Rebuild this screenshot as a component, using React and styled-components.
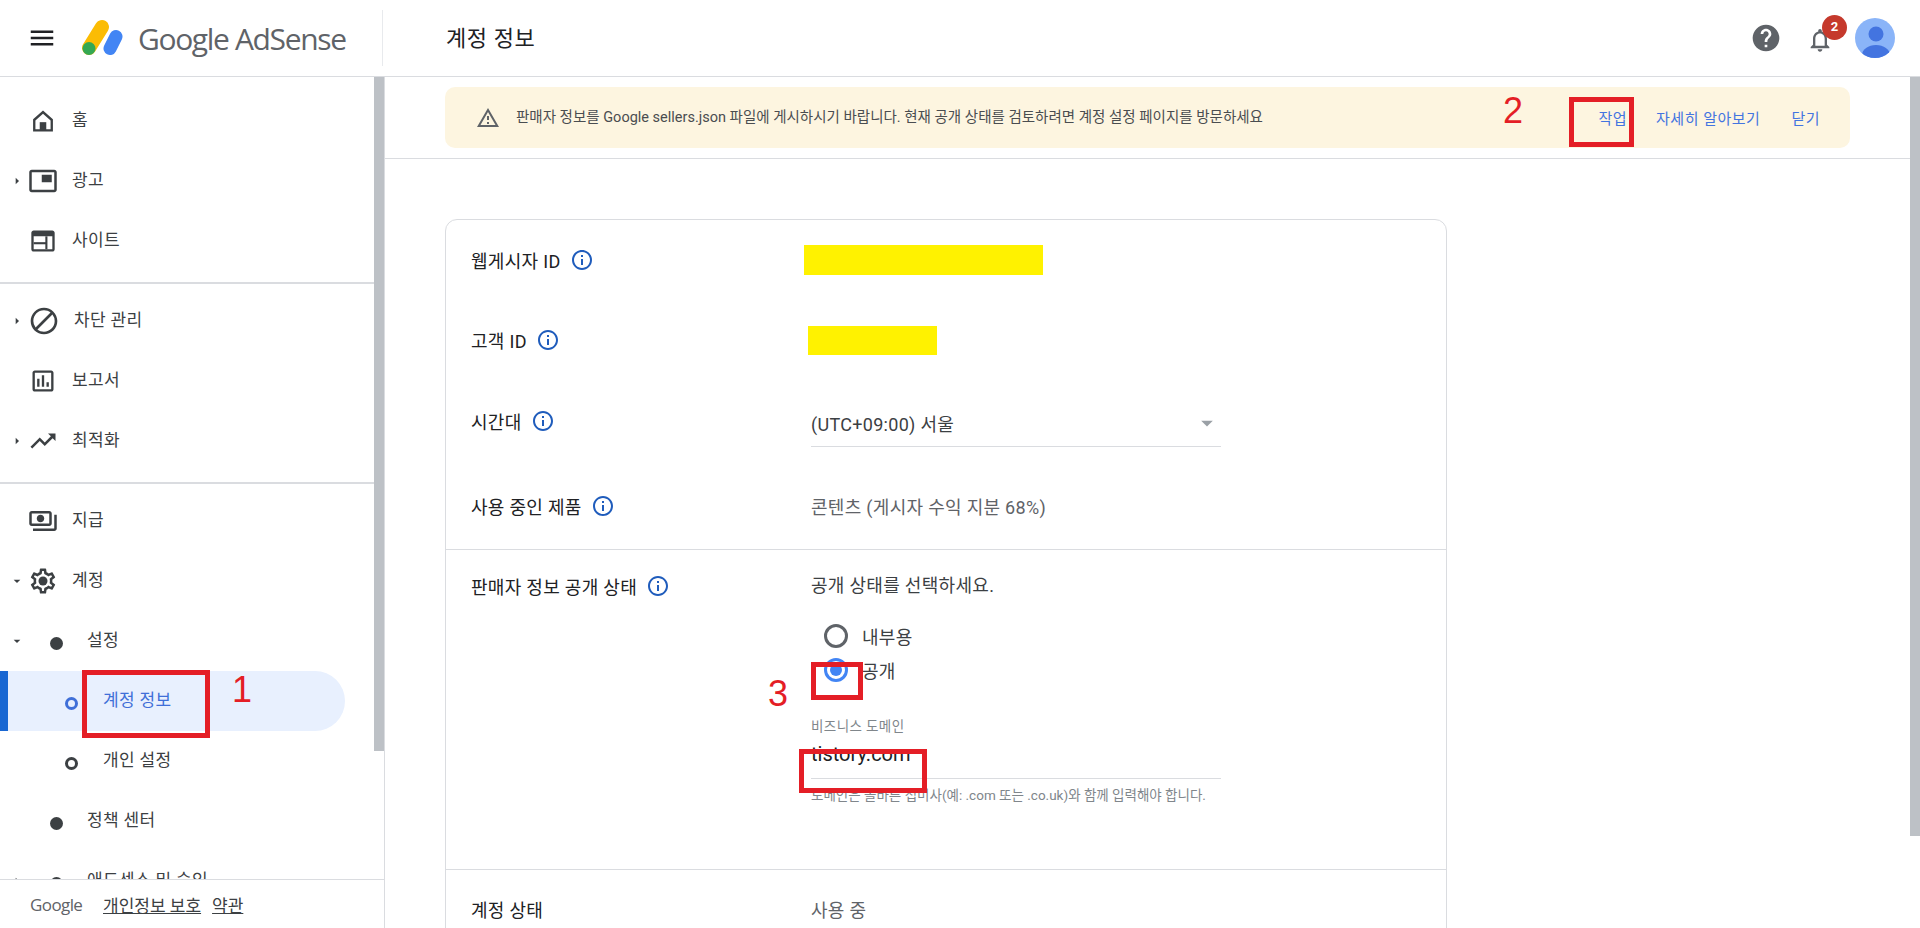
import React from "react";
import styled, { createGlobalStyle } from "styled-components";
import {
  MdMenu,
  MdHelp,
  MdOutlineNotifications,
  MdOutlineInfo,
  MdOutlineWarningAmber,
  MdBlock,
  MdTrendingUp,
  MdOutlineAssessment,
  MdOutlinePayments,
  MdPictureInPicture,
  MdArrowRight,
  MdArrowDropDown,
} from "react-icons/md";

const GlobalStyle = createGlobalStyle`
  html, body {
    margin: 0;
    height: 100%;
    overflow: hidden;
    background: #fff;
  }
  body {
    font-family: Roboto, "Noto Sans CJK KR", sans-serif;
    color: #3c4043;
  }
`;

const Page = styled.div`
  display: flex;
  flex-direction: column;
  height: 928px;
  overflow: hidden;
`;

const Header = styled.header`
  display: flex;
  align-items: center;
  flex: 0 0 76px;
  box-sizing: content-box;
  border-bottom: 1px solid #dadce0;
`;

const Brand = styled.div`
  display: flex;
  align-items: center;
  width: 383px;
  height: 56px;
  padding-left: 27px;
  box-sizing: border-box;
  border-right: 1px solid #e8eaed;
`;

const MenuButton = styled.span`
  display: flex;
  width: 30px;
  margin-right: 25px;
  color: #202124;
`;

const BrandName = styled.span`
  margin-left: 14px;
  font-family: "Open Sans", sans-serif;
  font-size: 30px;
  letter-spacing: -1.35px;
  color: #5f6368;
  white-space: nowrap;
`;

const PageTitle = styled.h1`
  flex: 1;
  margin: -4px 0 0 63px;
  font-size: 22px;
  font-weight: 400;
  letter-spacing: 0.6px;
  color: #202124;
`;

const HeaderTools = styled.div`
  display: flex;
  align-items: center;
  padding-right: 25px;
  color: #5f6368;
`;

const BellWrap = styled.span`
  position: relative;
  display: flex;
  margin: 3px 21px 0 24px;
`;

const Badge = styled.span`
  position: absolute;
  top: -11px;
  right: -13px;
  width: 25px;
  height: 25px;
  border-radius: 50%;
  background: #c5392c;
  color: #fff;
  font-size: 13px;
  font-weight: 700;
  line-height: 24px;
  text-align: center;
`;

const Body = styled.div`
  display: flex;
  flex: 1;
  min-height: 0;
`;

const Sidebar = styled.aside`
  display: flex;
  flex: 0 0 385px;
  box-sizing: border-box;
  border-right: 1px solid #dadce0;
`;

const SideColumn = styled.div`
  display: flex;
  flex-direction: column;
  flex: 1;
  min-width: 0;
`;

const Nav = styled.nav`
  flex: 1;
  min-height: 0;
  overflow: hidden;
  padding-top: 14px;
`;

const Thumb = styled.div`
  flex: 0 0 10px;
  height: ${(p) => p.$height}px;
  background: #bdc1c6;
`;

const NavRow = styled.div`
  display: flex;
  align-items: center;
  height: 60px;
  margin-right: 29px;
  padding-left: ${(p) => p.$indent || 0}px;
  position: relative;
  color: ${(p) => (p.$active ? "#3f6fd8" : "#3c4043")};
  background: ${(p) => (p.$active ? "#e8f0fe" : "transparent")};
  border-left: 8px solid ${(p) => (p.$active ? "#1967d2" : "transparent")};
  border-radius: ${(p) => (p.$active ? "0 30px 30px 0" : "0")};
  box-sizing: border-box;
`;

const Caret = styled.span`
  position: absolute;
  left: 1px;
  top: 50%;
  display: flex;
  margin-top: -8px;
  color: #3c4043;
`;

const NavIconBox = styled.span`
  display: flex;
  flex: 0 0 ${(p) => p.$width || 30}px;
  margin-left: 20px;
  justify-content: center;
  color: #3c4043;
`;

const NavLabel = styled.span`
  margin-left: 14px;
  margin-top: -6px;
  font-size: 17px;
  letter-spacing: 0.35px;
  white-space: nowrap;
`;

const Dot = styled.span`
  flex: 0 0 13px;
  height: 13px;
  margin-left: ${(p) => p.$left}px;
  margin-top: 4px;
  border-radius: 50%;
  box-sizing: border-box;
  ${(p) =>
    p.$ring
      ? `border: 3px solid ${p.$ring}; background: transparent;`
      : "background: #3c4043;"}
`;

const SubLabel = styled(NavLabel)`
  margin-left: ${(p) => p.$left}px;
`;

const SideRule = styled.div`
  height: 2px;
  margin: ${(p) => p.$top || 11}px 0 7px;
  background: #dadce0;
`;

const SideFooter = styled.div`
  display: flex;
  align-items: center;
  flex: 0 0 48px;
  padding: 0 0 0 30px;
  border-top: 1px solid #dadce0;
  margin-right: -10px;
  background: #fff;
  font-size: 17px;
  z-index: 1;
`;

const FooterBrand = styled.span`
  width: 73px;
  font-family: "Open Sans", sans-serif;
  font-size: 17px;
  letter-spacing: -0.6px;
  color: #5f6368;
`;

const FooterLink = styled.a`
  margin-right: 11px;
  color: #3c4043;
  text-decoration: underline;
  white-space: nowrap;
`;

const Main = styled.main`
  display: flex;
  flex: 1;
  min-width: 0;
`;

const Content = styled.div`
  flex: 1;
  min-width: 0;
  overflow: hidden;
  padding-top: 10px;
`;

const BannerArea = styled.div`
  padding: 0 60px 10px 60px;
  border-bottom: 1px solid #dadce0;
`;

const Banner = styled.div`
  position: relative;
  display: flex;
  align-items: center;
  height: 61px;
  padding-left: 31px;
  border-radius: 10px;
  background: #fdf5e0;
  font-size: 14.5px;
  color: #4a4d50;
`;

const BannerText = styled.span`
  flex: 1;
  margin-left: 16px;
  margin-top: -4px;
  white-space: nowrap;
`;

const BannerAction = styled.a`
  margin-right: ${(p) => p.$gap}px;
  color: #4374e0;
  font-size: 15px;
  letter-spacing: 0.5px;
  white-space: nowrap;
`;

const Card = styled.section`
  width: 1000px;
  margin: 60px 0 0 60px;
  border: 1px solid #dadce0;
  border-radius: 12px;
  font-size: 18px;
`;

const Row = styled.div`
  display: grid;
  grid-template-columns: 340px 410px;
  align-items: center;
  height: ${(p) => p.$height}px;
  padding-left: 25px;
`;

const Section = styled.div`
  position: relative;
  display: grid;
  grid-template-columns: 340px 410px;
  height: 321px;
  padding: 22px 0 0 25px;
  box-sizing: border-box;
  border-top: 1px solid #dadce0;
  border-bottom: 1px solid #dadce0;
`;

const Label = styled.div`
  display: flex;
  align-items: center;
  gap: 9px;
  color: #202124;
  letter-spacing: 0.3px;
  white-space: nowrap;
  height: 28px;
`;

const InfoIcon = styled(MdOutlineInfo)`
  color: #1f5cbc;
  flex: none;
`;

const Redaction = styled.div`
  width: ${(p) => p.$width}px;
  height: ${(p) => p.$height}px;
  margin-left: ${(p) => p.$left}px;
  background: #fff200;
`;

const SelectBox = styled.div`
  display: flex;
  align-items: center;
  justify-content: space-between;
  height: 46px;
  margin-top: 4px;
  border-bottom: 1px solid #dadce0;
  letter-spacing: 0.3px;
  color: #3c4043;
`;

const Value = styled.div`
  color: #5f6368;
  letter-spacing: 0.3px;
  white-space: nowrap;
`;

const Prompt = styled(Value)`
  height: 28px;
  line-height: 28px;
  color: #3c4043;
`;

const RadioRow = styled.label`
  display: flex;
  align-items: center;
  gap: 14px;
  height: 34px;
  margin-left: 13px;
  color: #3c4043;
  letter-spacing: 0.3px;
`;

const RadioMark = styled.span`
  display: flex;
  align-items: center;
  justify-content: center;
  width: 24px;
  height: 24px;
  box-sizing: border-box;
  border-radius: 50%;
  border: 3px solid ${(p) => (p.$on ? "#4285f4" : "#5f6368")};
  &::after {
    content: "";
    width: 12px;
    height: 12px;
    border-radius: 50%;
    background: ${(p) => (p.$on ? "#4285f4" : "transparent")};
  }
`;

const RadioGroup = styled.div`
  margin-top: 19px;
`;

const FieldCaption = styled.div`
  margin-top: 28px;
  font-size: 13.5px;
  letter-spacing: 0.4px;
  color: #80868b;
`;

const FieldInput = styled.div`
  height: 43px;
  line-height: 38px;
  border-bottom: 1px solid #dadce0;
  font-size: 20px;
  color: #202124;
`;

const HelpText = styled.div`
  margin-top: 6px;
  font-size: 13.5px;
  line-height: 20px;
  color: #80868b;
`;

const Callout = styled.div`
  position: absolute;
  left: ${(p) => p.$x}px;
  top: ${(p) => p.$y}px;
  width: ${(p) => p.$w}px;
  height: ${(p) => p.$h}px;
  box-sizing: border-box;
  border: 5px solid #e41e26;
  pointer-events: none;
`;

const CalloutNumber = styled.span`
  position: absolute;
  left: ${(p) => p.$x}px;
  top: ${(p) => p.$y}px;
  font-family: "Liberation Sans", sans-serif;
  font-size: 36px;
  line-height: 36px;
  color: #e41e26;
`;

const PageAnchor = styled.div`
  position: absolute;
  left: 0;
  top: 0;
`;

function Logo() {
  return (
    <svg width="42" height="38" viewBox="82 15 42 38">
      <line x1="89" y1="44" x2="102" y2="23" stroke="#fbbc04" strokeWidth="14" strokeLinecap="round" />
      <line x1="110" y1="44.5" x2="116" y2="32.5" stroke="#4285f4" strokeWidth="13" strokeLinecap="round" />
      <circle cx="89" cy="44.5" r="6.5" fill="#34a853" />
    </svg>
  );
}

function HomeIcon() {
  return (
    <svg width="28" height="28" viewBox="0 0 24 24" fill="currentColor">
      <path d="M12 3L3.5 10.6V21h17V10.6L12 3zm6.5 16h-13v-7.5L12 5.7l6.5 5.8V19z" />
      <rect x="9.2" y="13" width="5.6" height="7" />
    </svg>
  );
}

function SitesIcon() {
  return (
    <svg width="28" height="28" viewBox="0 0 24 24" fill="currentColor">
      <path d="M20 3H4c-1.1 0-2 .9-2 2v14c0 1.1.9 2 2 2h16c1.1 0 2-.9 2-2V5c0-1.1-.9-2-2-2zm0 16H4V8h16v11z" />
      <rect x="4" y="13" width="11" height="1.8" />
      <rect x="14" y="8" width="1.8" height="11" />
    </svg>
  );
}

function GearIcon() {
  return (
    <svg width="30" height="30" viewBox="0 0 24 24" fill="currentColor">
      <path d="M19.43 12.98c.04-.32.07-.64.07-.98 0-.34-.03-.66-.07-.98l2.11-1.65c.19-.15.24-.42.12-.64l-2-3.46c-.09-.16-.26-.25-.44-.25-.06 0-.12.01-.17.03l-2.49 1c-.52-.4-1.08-.73-1.69-.98l-.38-2.65C14.46 2.18 14.25 2 14 2h-4c-.25 0-.46.18-.49.42l-.38 2.65c-.61.25-1.17.59-1.69.98l-2.49-1c-.06-.02-.12-.03-.18-.03-.17 0-.34.09-.43.25l-2 3.46c-.13.22-.07.49.12.64l2.11 1.65c-.04.32-.07.65-.07.98 0 .33.03.66.07.98l-2.11 1.65c-.19.15-.24.42-.12.64l2 3.46c.09.16.26.25.44.25.06 0 .12-.01.17-.03l2.49-1c.52.4 1.08.73 1.69.98l.38 2.65c.03.24.24.42.49.42h4c.25 0 .46-.18.49-.42l.38-2.65c.61-.25 1.17-.59 1.69-.98l2.49 1c.06.02.12.03.18.03.17 0 .34-.09.43-.25l2-3.46c.12-.22.07-.49-.12-.64l-2.11-1.65zm-1.98-1.71c.04.31.05.52.05.73 0 .21-.02.43-.05.73l-.14 1.13.89.7 1.08.84-.7 1.21-1.27-.51-1.04-.42-.9.68c-.43.32-.84.56-1.25.73l-1.06.43-.16 1.13-.2 1.35h-1.4l-.19-1.35-.16-1.13-1.06-.43c-.43-.18-.83-.41-1.23-.71l-.91-.7-1.06.43-1.27.51-.7-1.21 1.08-.84.89-.7-.14-1.13c-.03-.31-.05-.54-.05-.74s.02-.43.05-.73l.14-1.13-.89-.7-1.08-.84.7-1.21 1.27.51 1.04.42.9-.68c.43-.32.84-.56 1.25-.73l1.06-.43.16-1.13.2-1.35h1.39l.19 1.35.16 1.13 1.06.43c.43.18.83.41 1.23.71l.91.7 1.06-.43 1.27-.51.7 1.21-1.07.85-.89.7.14 1.13z" />
      <circle cx="12" cy="12" r="3.6" />
    </svg>
  );
}

function Avatar() {
  return (
    <svg width="40" height="40" viewBox="0 0 40 40">
      <defs>
        <clipPath id="avatar-clip">
          <circle cx="20" cy="20" r="20" />
        </clipPath>
      </defs>
      <g clipPath="url(#avatar-clip)">
        <rect width="40" height="40" fill="#8ab4f8" />
        <circle cx="21" cy="16" r="7.5" fill="#4374e0" />
        <ellipse cx="21" cy="37" rx="14" ry="10" fill="#4374e0" />
      </g>
    </svg>
  );
}

function Item({ icon, label, caret, open }) {
  return (
    <NavRow>
      {caret && (
        <Caret>
          {open ? <MdArrowDropDown size={16} /> : <MdArrowRight size={16} />}
        </Caret>
      )}
      <NavIconBox>{icon}</NavIconBox>
      <NavLabel>{label}</NavLabel>
    </NavRow>
  );
}

export default function App() {
  return (
    <Page>
      <GlobalStyle />
      <Header>
        <Brand>
          <MenuButton>
            <MdMenu size={30} />
          </MenuButton>
          <Logo />
          <BrandName>Google AdSense</BrandName>
        </Brand>
        <PageTitle>계정 정보</PageTitle>
        <HeaderTools>
          <MdHelp size={32} />
          <BellWrap>
            <MdOutlineNotifications size={28} />
            <Badge>2</Badge>
          </BellWrap>
          <Avatar />
        </HeaderTools>
      </Header>

      <Body>
        <Sidebar>
          <SideColumn>
            <Nav>
              <Item icon={<HomeIcon />} label="홈" />
              <Item icon={<MdPictureInPicture size={30} />} label="광고" caret />
              <Item icon={<SitesIcon />} label="사이트" />
              <SideRule />
              <Item icon={<MdBlock size={32} />} label="차단 관리" caret />
              <Item icon={<MdOutlineAssessment size={28} />} label="보고서" />
              <Item icon={<MdTrendingUp size={30} />} label="최적화" caret />
              <SideRule />
              <Item icon={<MdOutlinePayments size={30} />} label="지급" />
              <Item icon={<GearIcon />} label="계정" caret open />
              <NavRow>
                <Caret>
                  <MdArrowDropDown size={16} />
                </Caret>
                <Dot $left={42} />
                <SubLabel $left={24}>설정</SubLabel>
              </NavRow>
              <NavRow $active>
                <Dot $left={57} $ring="#3f6fd8" />
                <SubLabel $left={25}>계정 정보</SubLabel>
              </NavRow>
              <NavRow>
                <Dot $left={57} $ring="#3c4043" />
                <SubLabel $left={25}>개인 설정</SubLabel>
              </NavRow>
              <NavRow>
                <Dot $left={42} />
                <SubLabel $left={24}>정책 센터</SubLabel>
              </NavRow>
              <NavRow>
                <Caret>
                  <MdArrowRight size={16} />
                </Caret>
                <Dot $left={42} />
                <SubLabel $left={24}>애드센스 및 승인</SubLabel>
              </NavRow>
            </Nav>
            <SideFooter>
              <FooterBrand>Google</FooterBrand>
              <FooterLink>개인정보 보호</FooterLink>
              <FooterLink>약관</FooterLink>
            </SideFooter>
          </SideColumn>
          <Thumb $height={674} />
        </Sidebar>

        <Main>
          <Content>
            <BannerArea>
              <Banner>
                <MdOutlineWarningAmber size={24} color="#5f6368" />
                <BannerText>
                  판매자 정보를 Google sellers.json 파일에 게시하시기 바랍니다. 현재 공개 상태를 검토하려면 계정 설정 페이지를 방문하세요
                </BannerText>
                <BannerAction $gap={29}>작업</BannerAction>
                <BannerAction $gap={31}>자세히 알아보기</BannerAction>
                <BannerAction $gap={30}>닫기</BannerAction>
              </Banner>
            </BannerArea>
            <Card>
              <Row $height={80}>
                <Label>
                  웹게시자 ID <InfoIcon size={24} />
                </Label>
                <Redaction $width={239} $height={30} $left={-7} />
              </Row>
              <Row $height={80}>
                <Label>
                  고객 ID <InfoIcon size={24} />
                </Label>
                <Redaction $width={129} $height={29} $left={-3} />
              </Row>
              <Row $height={82}>
                <Label>
                  시간대 <InfoIcon size={24} />
                </Label>
                <SelectBox>
                  (UTC+09:00) 서울
                  <MdArrowDropDown size={28} color="#9aa0a6" />
                </SelectBox>
              </Row>
              <Row $height={87}>
                <Label>
                  사용 중인 제품 <InfoIcon size={24} />
                </Label>
                <Value>콘텐츠 (게시자 수익 지분 68%)</Value>
              </Row>
              <Section>
                <Label>
                  판매자 정보 공개 상태 <InfoIcon size={24} />
                </Label>
                <div>
                  <Prompt>공개 상태를 선택하세요.</Prompt>
                  <RadioGroup>
                    <RadioRow>
                      <RadioMark />
                      내부용
                    </RadioRow>
                    <RadioRow>
                      <RadioMark $on />
                      공개
                    </RadioRow>
                  </RadioGroup>
                  <FieldCaption>비즈니스 도메인</FieldCaption>
                  <FieldInput>tistory.com</FieldInput>
                  <HelpText>
                    도메인은 올바른 접미사(예: .com 또는 .co.uk)와 함께 입력해야 합니다.
                  </HelpText>
                </div>
              </Section>
              <Row $height={78}>
                <Label>계정 상태</Label>
                <Value>사용 중</Value>
              </Row>
            </Card>
          </Content>
          <Thumb $height={759} />
        </Main>
      </Body>

      <PageAnchor>
        <Callout $x={82} $y={670} $w={128} $h={68} />
        <CalloutNumber $x={232} $y={672}>1</CalloutNumber>
        <Callout $x={1569} $y={97} $w={65} $h={50} />
        <CalloutNumber $x={1503} $y={93}>2</CalloutNumber>
        <Callout $x={811} $y={662} $w={52} $h={38} />
        <CalloutNumber $x={768} $y={676}>3</CalloutNumber>
        <Callout $x={799} $y={749} $w={128} $h={44} />
      </PageAnchor>
    </Page>
  );
}
